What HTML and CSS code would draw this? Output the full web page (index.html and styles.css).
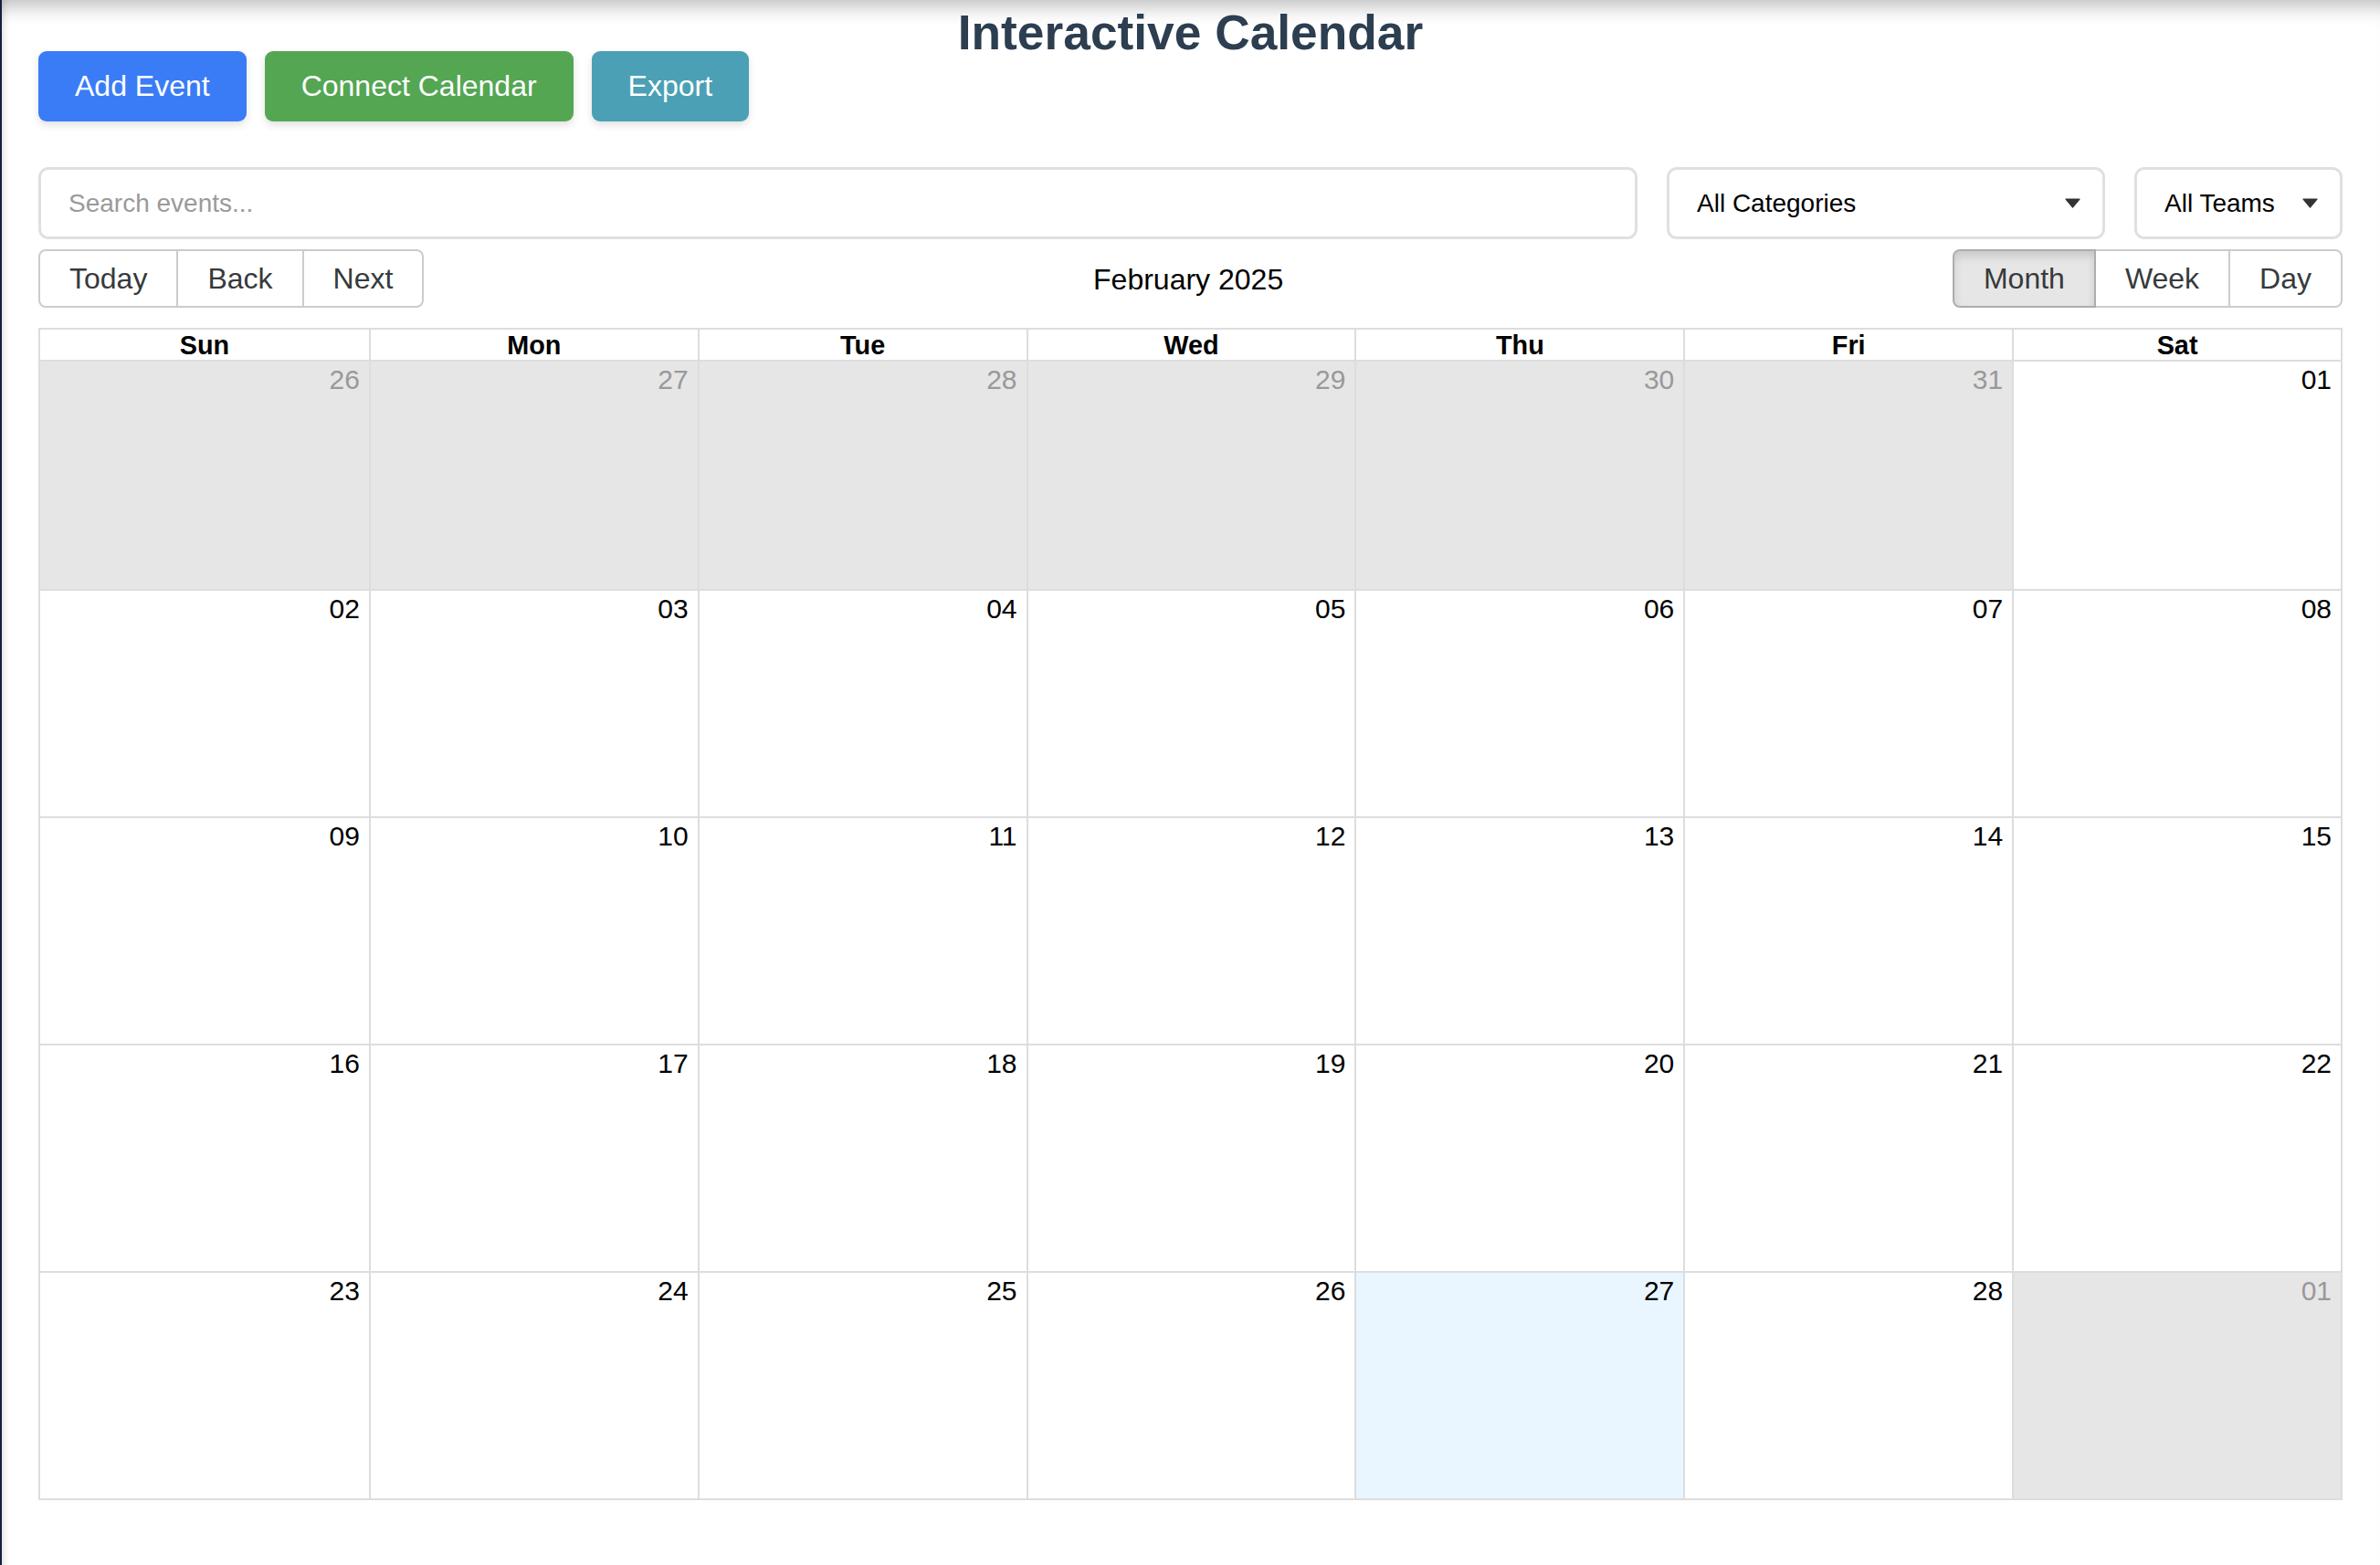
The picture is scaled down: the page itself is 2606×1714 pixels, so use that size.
FILE: index.html
```html
<!DOCTYPE html>
<html lang="en">
<head>
<meta charset="utf-8">
<title>Interactive Calendar</title>
<link rel="stylesheet" href="styles.css">
</head>
<body>
<div class="app">
  <h1 class="title">Interactive Calendar</h1>
  <div class="actions">
    <button class="action action-blue">Add Event</button>
    <button class="action action-green">Connect Calendar</button>
    <button class="action action-teal">Export</button>
  </div>
  <div class="filters">
    <input class="search" type="text" placeholder="Search events...">
    <div class="select-wrap select-cat">
      <select class="select"><option>All Categories</option></select>
      <svg class="caret" width="17" height="11" viewBox="0 0 17 11"><path d="M1 1 H16 L8.5 10 Z" fill="#333" stroke="#333" stroke-width="1.2" stroke-linejoin="round"/></svg>
    </div>
    <div class="select-wrap select-team">
      <select class="select"><option>All Teams</option></select>
      <svg class="caret" width="17" height="11" viewBox="0 0 17 11"><path d="M1 1 H16 L8.5 10 Z" fill="#333" stroke="#333" stroke-width="1.2" stroke-linejoin="round"/></svg>
    </div>
  </div>
  <div class="toolbar">
    <div class="btn-group">
      <button class="tb-btn">Today</button>
      <button class="tb-btn">Back</button>
      <button class="tb-btn">Next</button>
    </div>
    <span class="toolbar-label">February 2025</span>
    <div class="btn-group">
      <button class="tb-btn active">Month</button>
      <button class="tb-btn">Week</button>
      <button class="tb-btn">Day</button>
    </div>
  </div>
  <div class="month">
    <div class="month-header">
      <div class="head">Sun</div>
      <div class="head">Mon</div>
      <div class="head">Tue</div>
      <div class="head">Wed</div>
      <div class="head">Thu</div>
      <div class="head">Fri</div>
      <div class="head">Sat</div>
    </div>
    <div class="week">
      <div class="day off">26</div>
      <div class="day off">27</div>
      <div class="day off">28</div>
      <div class="day off">29</div>
      <div class="day off">30</div>
      <div class="day off">31</div>
      <div class="day">01</div>
    </div>
    <div class="week">
      <div class="day">02</div>
      <div class="day">03</div>
      <div class="day">04</div>
      <div class="day">05</div>
      <div class="day">06</div>
      <div class="day">07</div>
      <div class="day">08</div>
    </div>
    <div class="week">
      <div class="day">09</div>
      <div class="day">10</div>
      <div class="day">11</div>
      <div class="day">12</div>
      <div class="day">13</div>
      <div class="day">14</div>
      <div class="day">15</div>
    </div>
    <div class="week">
      <div class="day">16</div>
      <div class="day">17</div>
      <div class="day">18</div>
      <div class="day">19</div>
      <div class="day">20</div>
      <div class="day">21</div>
      <div class="day">22</div>
    </div>
    <div class="week">
      <div class="day">23</div>
      <div class="day">24</div>
      <div class="day">25</div>
      <div class="day">26</div>
      <div class="day today">27</div>
      <div class="day">28</div>
      <div class="day off">01</div>
    </div>
  </div>
</div>
</body>
</html>
```
FILE: styles.css
```css
* { box-sizing: border-box; }

html, body {
  margin: 0;
  padding: 0;
}

body {
  background: #14213b;
  font-family: "Liberation Sans", Arial, Helvetica, sans-serif;
  color: #000;
}

.app {
  margin-left: 2px;
  min-height: 1714px;
  background: #fff;
  padding: 9px 41px 0 40px;
  box-shadow: inset 0 26px 22px -20px rgba(0, 0, 0, 0.28),
              inset 10px 0 9px -9px rgba(0, 0, 0, 0.16);
}

.title {
  margin: 0 0 -6px;
  font-size: 53.3px;
  line-height: 53px;
  font-weight: bold;
  text-align: center;
  color: #2c3e50;
}

.actions {
  display: flex;
  gap: 20px;
  margin-bottom: 50px;
}

.action {
  border: none;
  border-radius: 9px;
  padding: 20px 40px;
  font-family: inherit;
  font-size: 32px;
  line-height: 37px;
  color: #fff;
  box-shadow: 0 4px 9px rgba(0, 0, 0, 0.12);
}

.action-blue { background: #3a7cf6; }
.action-green { background: #54a653; }
.action-teal { background: #4ba0b5; }

.filters {
  display: flex;
  gap: 32px;
  margin-bottom: 11px;
}

.search {
  flex: 1;
  height: 79px;
  border: 3px solid #e0e0e0;
  border-radius: 11px;
  padding: 0 30px;
  font-family: inherit;
  font-size: 28px;
  color: #333;
  outline: none;
}

.search::placeholder { color: #9a9a9a; }

.select-wrap {
  position: relative;
  height: 79px;
}

.select-cat { width: 480px; }
.select-team { width: 228px; }

.select {
  appearance: none;
  -webkit-appearance: none;
  width: 100%;
  height: 100%;
  border: 3px solid #e0e0e0;
  border-radius: 11px;
  background: #fff;
  padding: 0 30px;
  font-family: inherit;
  font-size: 28px;
  color: #000;
}

.caret {
  position: absolute;
  right: 27px;
  top: 34px;
  pointer-events: none;
}

.toolbar {
  display: flex;
  align-items: center;
  margin-bottom: 22px;
}

.toolbar-label {
  flex: 1;
  text-align: center;
  font-size: 32px;
  padding: 2px 20px 0;
  color: #000;
}

.btn-group {
  display: flex;
}

.tb-btn {
  background: #fff;
  border: 2px solid #ccc;
  border-radius: 0;
  padding: 12px 32px;
  font-family: inherit;
  font-size: 32px;
  line-height: 36px;
  color: #373a3c;
}

.tb-btn + .tb-btn { margin-left: -2px; }

.tb-btn:first-child { border-radius: 8px 0 0 8px; }
.tb-btn:last-child { border-radius: 0 8px 8px 0; }

.tb-btn.active {
  background: #e6e6e6;
  border-color: #adadad;
  box-shadow: inset 0 6px 10px rgba(0, 0, 0, 0.125);
  position: relative;
}

.month {
  border: 2px solid #ddd;
}

.month-header {
  display: grid;
  grid-template-columns: repeat(7, 1fr);
}

.head {
  font-size: 28.8px;
  font-weight: bold;
  line-height: 32px;
  padding-top: 1px;
  text-align: center;
  border-bottom: 2px solid #ddd;
}

.head + .head { border-left: 2px solid #ddd; }

.week {
  display: grid;
  grid-template-columns: repeat(7, 1fr);
  height: 249px;
}

.week + .week { border-top: 2px solid #ddd; }

.day {
  font-size: 30px;
  text-align: right;
  padding: 3px 10px 0 0;
  color: #000;
  background: #fff;
}

.day + .day { border-left: 2px solid #ddd; }

.day.off {
  background: #e6e6e6;
  color: #999;
}

.day.today { background: #eaf6ff; }
```
